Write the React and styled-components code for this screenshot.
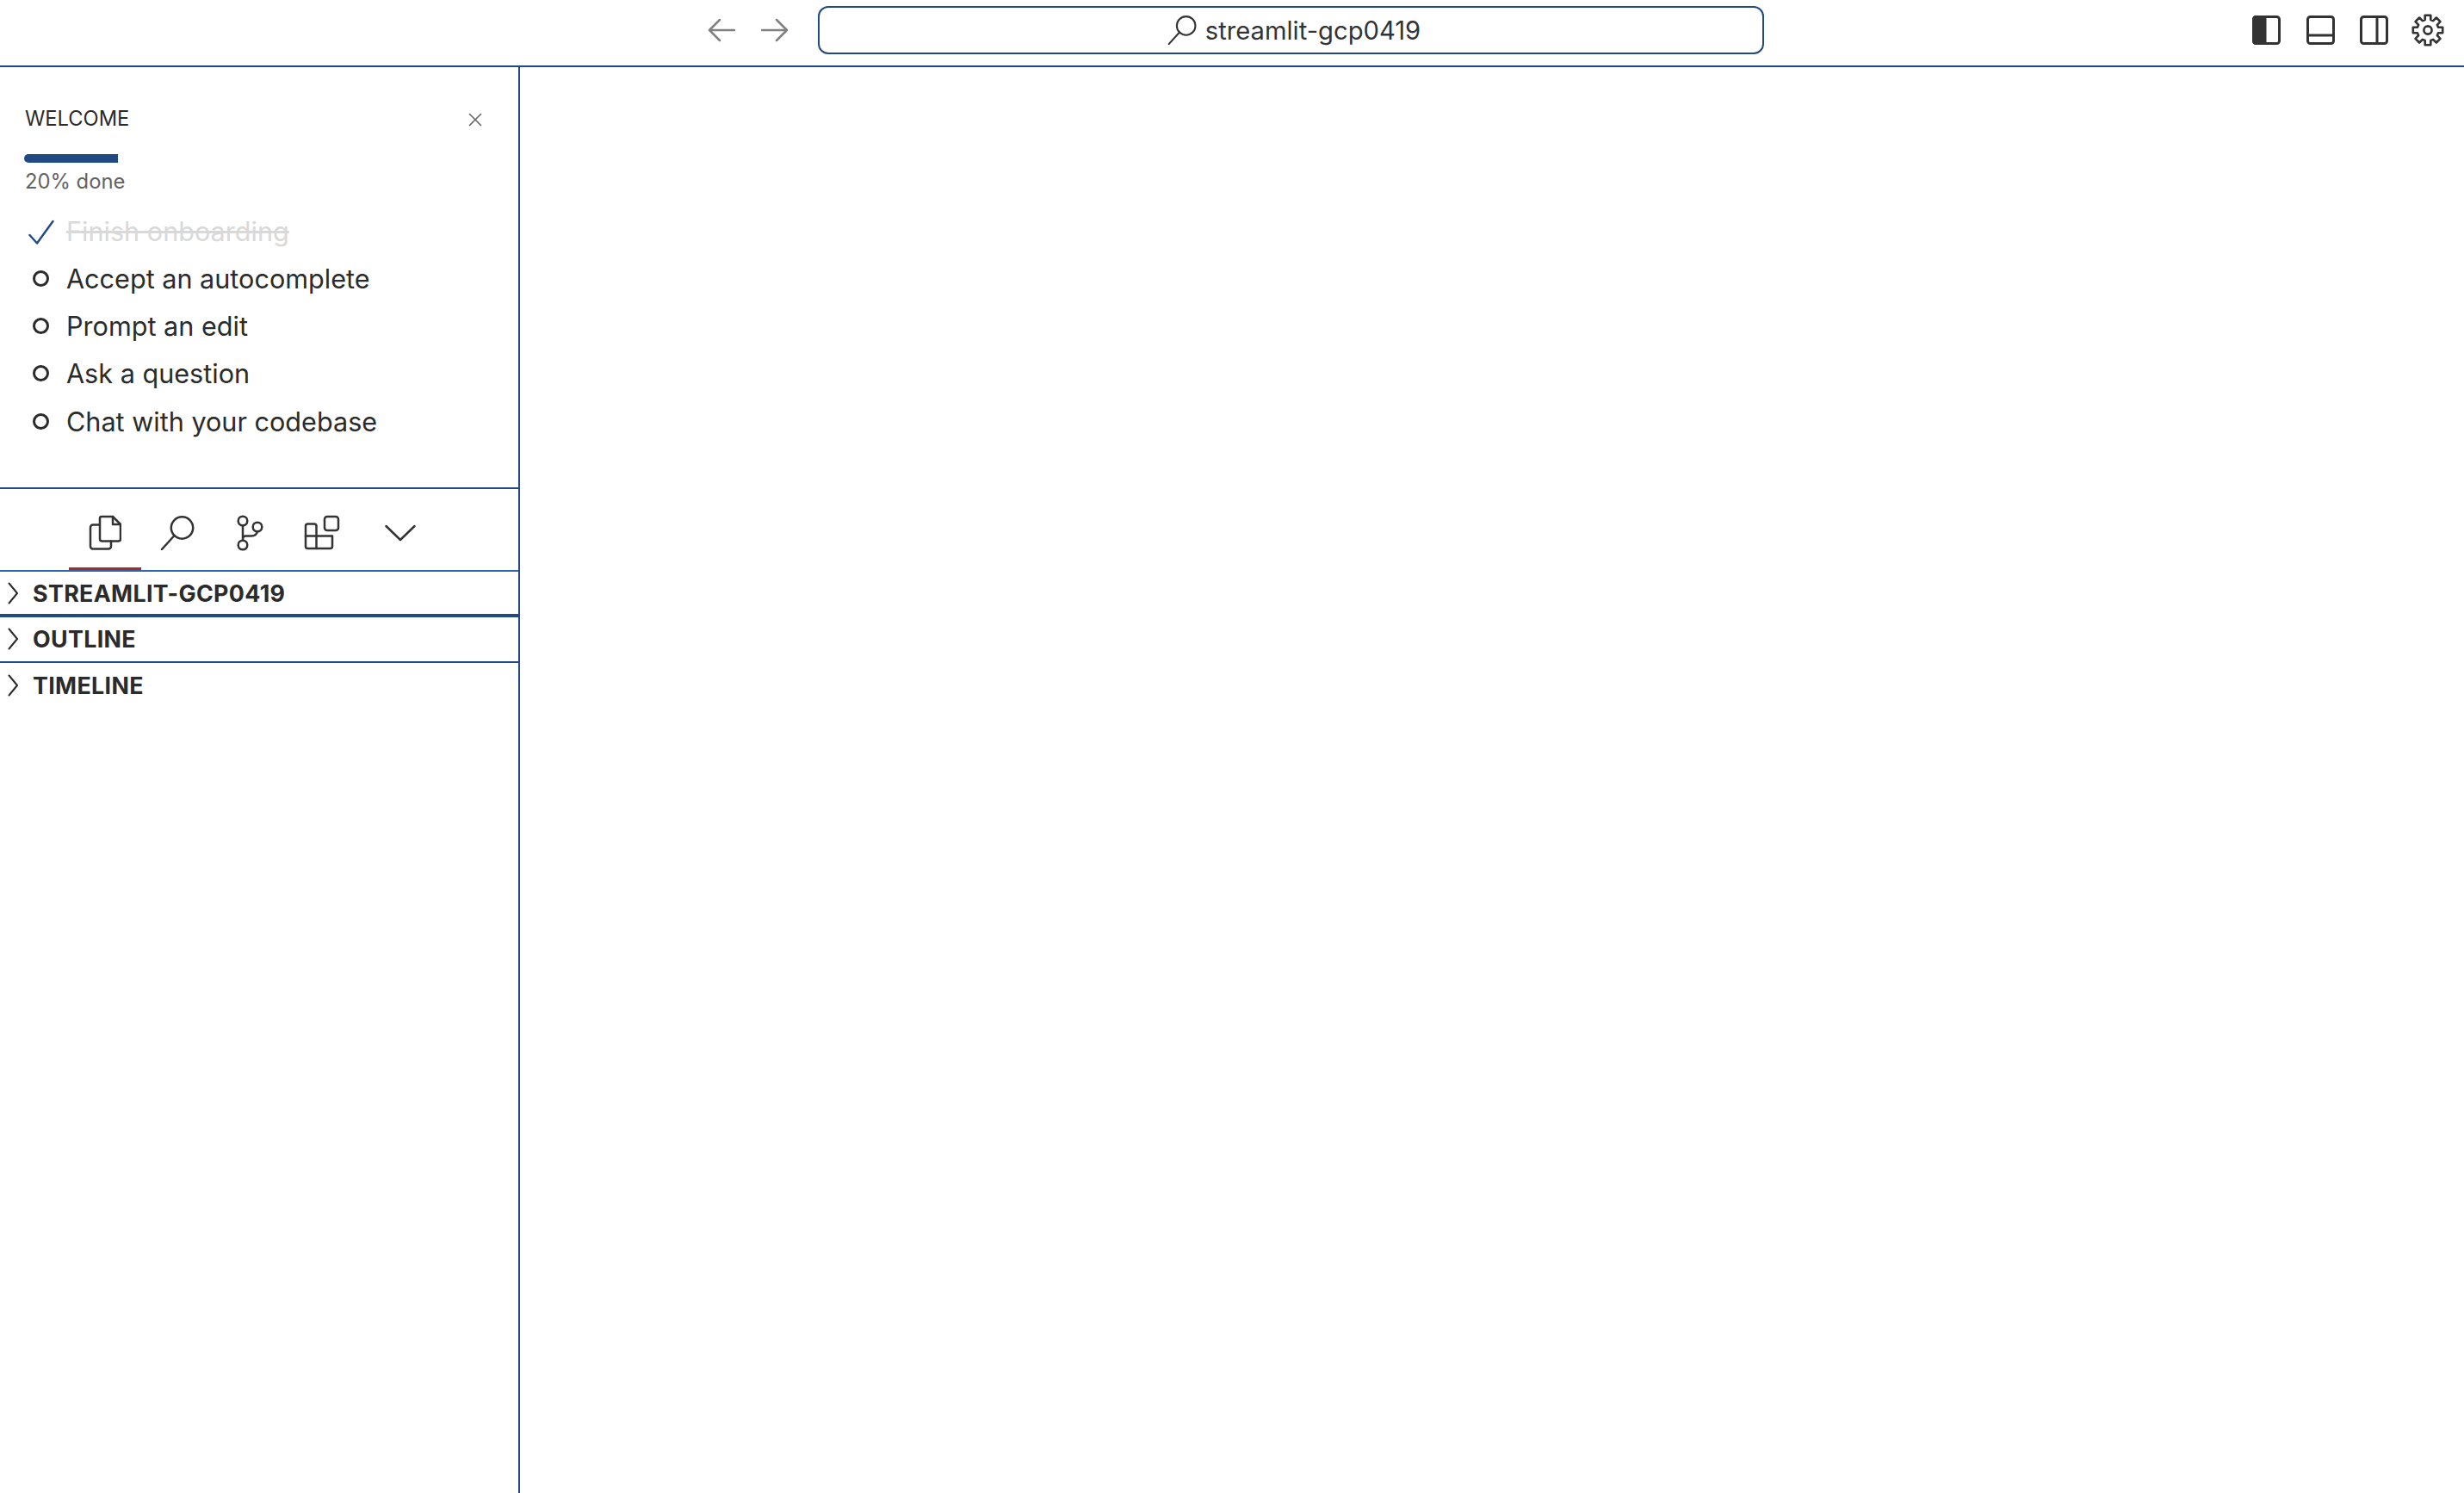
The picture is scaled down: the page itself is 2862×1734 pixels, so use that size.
import React from "react";
import styled, { createGlobalStyle } from "styled-components";

const Global = createGlobalStyle`
  html, body { margin: 0; padding: 0; height: 100%; background: #fff; overflow: hidden; }
  #root { height: 100%; }
  * { box-sizing: border-box; }
`;

const Page = styled.div`
  height: 100vh;
  display: flex;
  flex-direction: column;
  font-family: Inter, "Liberation Sans", sans-serif;
  color: #2b2b2b;
  background: #fff;
`;
const TopBar = styled.header`
  height: 78px;
  flex: none;
  display: flex;
  align-items: flex-start;
  border-bottom: 2px solid #214a85;
  padding: 0 23px 0 807px;
`;
const NavButton = styled.span`
  display: flex;
  width: 62px;
  height: 70px;
  align-items: center;
  justify-content: center;
  color: #808080;
`;
const Address = styled.div`
  width: 1099px;
  height: 56px;
  margin: 7px 0 0 19px;
  padding-left: 7px;
  border: 2px solid #214a85;
  border-radius: 12px;
  display: flex;
  align-items: center;
  justify-content: center;
  gap: 10px;
  font-size: 29.2px;
  color: #333;
`;
const LayoutIcons = styled.div`
  margin-left: auto;
  display: flex;
  align-items: center;
  height: 70px;
  gap: 29.5px;
  color: #333;
`;
const GearSlot = styled.span`
  display: flex;
  margin-left: -2.5px;
`;
const Body = styled.main`
  flex: 1;
  display: flex;
  min-height: 0;
`;
const Sidebar = styled.aside`
  width: 604px;
  flex: none;
  border-right: 2px solid #214a85;
  display: flex;
  flex-direction: column;
`;
const Welcome = styled.section`
  height: 490px;
  flex: none;
  padding: 44px 0 0 29px;
  border-bottom: 2px solid #214a85;
`;
const WelcomeHead = styled.div`
  display: flex;
  align-items: center;
  justify-content: space-between;
  padding-right: 42px;
  height: 30px;
`;
const WelcomeTitle = styled.span`
  font-size: 23.7px;
  color: #2b2b2b;
`;
const CloseSlot = styled.span`
  display: flex;
  color: #666;
  padding-top: 3px;
`;
const Track = styled.div`
  margin: 27px 0 0 -1px;
  width: 109px;
  height: 10px;
`;
const Fill = styled.div`
  height: 100%;
  background: #214a85;
  border-radius: 5px 0 0 5px;
`;
const Done = styled.div`
  margin-top: 7px;
  font-size: 23.8px;
  line-height: 30px;
  color: #636363;
`;
const Tasks = styled.ul`
  list-style: none;
  margin: 14.4px 0 0;
  padding: 0;
`;
const Task = styled.li`
  display: flex;
  align-items: center;
  height: 55.3px;
  font-size: 30.6px;
  color: ${p => (p.$done ? "#d9d9d9" : "#2b2b2b")};
  text-decoration: ${p => (p.$done ? "line-through" : "none")};
`;
const TaskMark = styled.span`
  width: 48px;
  flex: none;
  display: flex;
  align-items: center;
  padding: ${p => (p.$done ? "3px 0 0 4px" : "0 0 0 9px")};
`;
const Ring = styled.span`
  width: 19px;
  height: 19px;
  border: 3.5px solid #2b2b2b;
  border-radius: 50%;
`;
const Tabs = styled.nav`
  height: 96px;
  flex: none;
  display: flex;
  padding-left: 80px;
  border-bottom: 2px solid #2a65ae;
`;
const Tab = styled.span`
  width: ${p => p.$w || 84}px;
  height: 94px;
  flex: none;
  display: flex;
  align-items: center;
  justify-content: center;
  padding-top: 10px;
  color: #333;
  border-bottom: 3px solid ${p => (p.$active ? "#a82c23" : "transparent")};
`;
const Section = styled.div`
  height: ${p => p.$h}px;
  flex: none;
  display: flex;
  align-items: center;
  gap: 17px;
  padding: 0 0 ${p => p.$pb}px 9px;
  font-size: 26.8px;
  font-weight: 700;
  letter-spacing: 0.35px;
  color: #2b2b2b;
  border-bottom: ${p => (p.$line ? `${p.$line}px solid #214a85` : "none")};
`;

const Svg = ({ w, h, vw, vh, sw = 2.5, children }) => (
  <svg width={w} height={h} viewBox={`0 0 ${vw ?? w} ${vh ?? h}`} fill="none" stroke="currentColor" strokeWidth={sw} strokeLinecap="round" strokeLinejoin="round">
    {children}
  </svg>
);

const ArrowLeft = () => (
  <Svg w={32} h={28}><path d="M31 14H2M14 2 2 14l12 12" /></Svg>
);
const ArrowRight = () => (
  <Svg w={32} h={28}><path d="M1 14h29M18 2l12 12-12 12" /></Svg>
);
const SearchIcon = ({ size = 40, sw = 2.5 }) => (
  <Svg w={size} h={size} vw={40} vh={40} sw={sw}><circle cx="25.5" cy="14" r="12.7" /><path d="M16.5 23 2 39" /></Svg>
);
const PanelLeft = () => (
  <Svg w={33} h={34} sw={3}>
    <rect x="1.5" y="1.5" width="30" height="31" rx="3" />
    <path d="M1.5 4.5a3 3 0 0 1 3-3H15v31H4.5a3 3 0 0 1-3-3z" fill="currentColor" />
  </Svg>
);
const PanelBottom = () => (
  <Svg w={33} h={34} sw={3}>
    <rect x="1.5" y="1.5" width="30" height="31" rx="3" />
    <path d="M1.5 23h30" />
  </Svg>
);
const PanelRight = () => (
  <Svg w={33} h={34} sw={3}>
    <rect x="1.5" y="1.5" width="30" height="31" rx="3" />
    <path d="M20 1.5v31" />
  </Svg>
);
const Gear = () => {
  const teeth = 8;
  const c = 19;
  let d = "";
  for (let i = 0; i < teeth; i++) {
    const a = (i / teeth) * Math.PI * 2 - Math.PI / 2;
    const s = Math.PI / teeth;
    const pt = (r, t) => `${(c + r * Math.cos(t)).toFixed(2)} ${(c + r * Math.sin(t)).toFixed(2)}`;
    d += `${i === 0 ? "M" : "L"}${pt(12.5, a - s * 0.68)} L${pt(17.5, a - s * 0.48)} L${pt(17.5, a + s * 0.48)} L${pt(12.5, a + s * 0.68)} `;
  }
  d += "Z";
  return (
    <Svg w={38} h={38} sw={2.6}>
      <path d={d} />
      <circle cx={c} cy={c} r="4.6" />
    </Svg>
  );
};
const Close = () => (
  <Svg w={16} h={16} sw={1.6}><path d="M1.5 1.5l13 13M14.5 1.5l-13 13" /></Svg>
);
const Check = () => (
  <svg width="30" height="30" viewBox="0 0 30 30" fill="none" stroke="#214a85" strokeWidth="2.4" strokeLinecap="round" strokeLinejoin="round">
    <path d="M1.5 18 10 27.5 28.5 2" />
  </svg>
);
const Files = () => (
  <Svg w={38} h={42}>
    <path d="M12 11.5H5a3 3 0 0 0-3 3v22a3 3 0 0 0 3 3h18a3 3 0 0 0 3-3v-6" />
    <path d="M15 2h13l9 9v17a2.5 2.5 0 0 1-2.5 2.5h-19A2.5 2.5 0 0 1 13 28V4a2 2 0 0 1 2-2z" />
    <path d="M28 2v9h9" />
  </Svg>
);
const Branch = () => (
  <Svg w={32} h={42}>
    <circle cx="8" cy="7" r="5.3" />
    <circle cx="8" cy="35" r="5.3" />
    <circle cx="25" cy="14" r="5.3" />
    <path d="M8 12.5v17M8 28c0-2.500 1.500-3.500 3.500-3.500h6.500c3.500 0 6-1.500 7-5" />
  </Svg>
);
const Extensions = () => (
  <Svg w={42} h={42}>
    <path d="M4.500 10.500h7.500a2.500 2.500 0 0 1 2.500 2.500v26H4.500A2.500 2.500 0 0 1 2 36.500V13a2.500 2.500 0 0 1 2.500-2.500z" />
    <path d="M2 24.500h31V36.500A2.500 2.500 0 0 1 30.500 39H14.500" />
    <rect x="24" y="2" width="16" height="16" rx="3" />
  </Svg>
);
const ChevronDown = () => (
  <Svg w={36} h={20}><path d="M1.500 2 18 18 34.500 2" /></Svg>
);
const ChevronRight = () => (
  <Svg w={12} h={26} sw={2}><path d="M1.500 1.500 11 13 1.500 24.500" /></Svg>
);

const tasks = ["Accept an autocomplete", "Prompt an edit", "Ask a question", "Chat with your codebase"];
const sections = [
  { t: "STREAMLIT-GCP0419", h: 53, line: 4, pb: 0 },
  { t: "OUTLINE", h: 53, line: 2, pb: 2 },
  { t: "TIMELINE", h: 53, line: 0, pb: 2 },
];

export default function App() {
  return (
    <Page>
      <Global />
      <TopBar>
        <NavButton><ArrowLeft /></NavButton>
        <NavButton><ArrowRight /></NavButton>
        <Address>
          <SearchIcon size={34} sw={2.4} />
          <span>streamlit-gcp0419</span>
        </Address>
        <LayoutIcons>
          <PanelLeft />
          <PanelBottom />
          <PanelRight />
          <GearSlot><Gear /></GearSlot>
        </LayoutIcons>
      </TopBar>
      <Body>
        <Sidebar>
          <Welcome>
            <WelcomeHead>
              <WelcomeTitle>WELCOME</WelcomeTitle>
              <CloseSlot><Close /></CloseSlot>
            </WelcomeHead>
            <Track><Fill /></Track>
            <Done>20% done</Done>
            <Tasks>
              <Task $done>
                <TaskMark $done><Check /></TaskMark>
                Finish onboarding
              </Task>
              {tasks.map(t => (
                <Task key={t}>
                  <TaskMark><Ring /></TaskMark>
                  {t}
                </Task>
              ))}
            </Tasks>
          </Welcome>
          <Tabs>
            <Tab $active><Files /></Tab>
            <Tab><SearchIcon /></Tab>
            <Tab><Branch /></Tab>
            <Tab><Extensions /></Tab>
            <Tab $w={98}><ChevronDown /></Tab>
          </Tabs>
          {sections.map(s => (
            <Section key={s.t} $h={s.h} $line={s.line} $pb={s.pb}>
              <ChevronRight />
              {s.t}
            </Section>
          ))}
        </Sidebar>
      </Body>
    </Page>
  );
}
